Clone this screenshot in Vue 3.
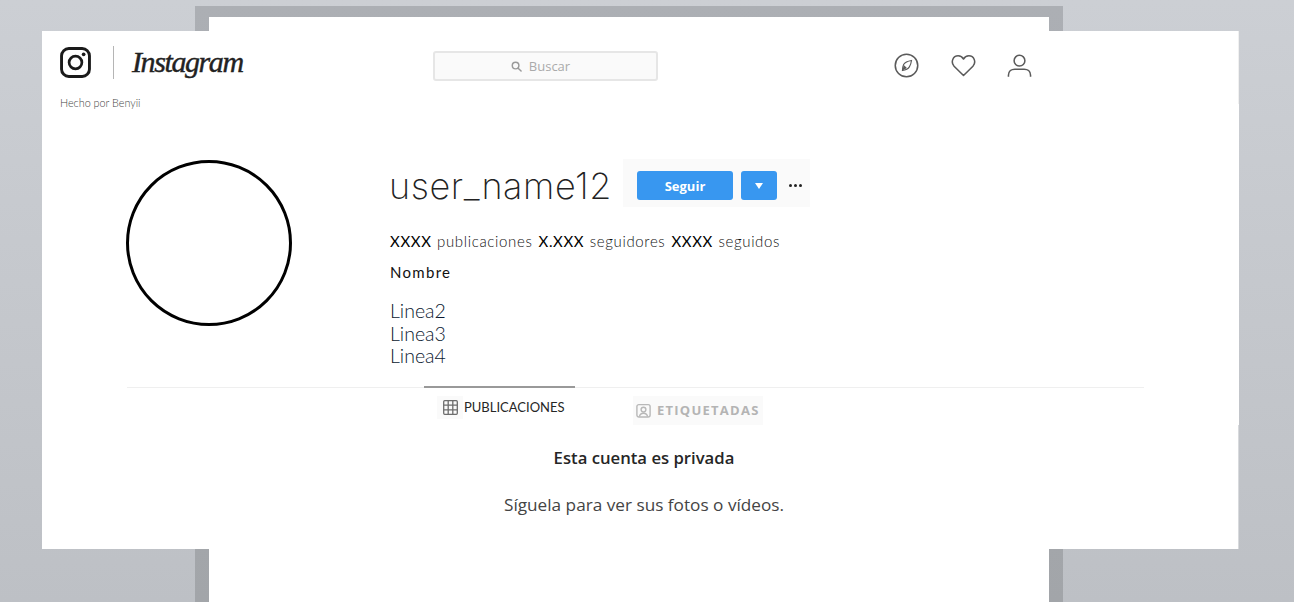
<script setup>
const stats = [
  { value: 'XXXX', label: 'publicaciones' },
  { value: 'X.XXX', label: 'seguidores' },
  { value: 'XXXX', label: 'seguidos' }
]
const lines = ['Linea2', 'Linea3', 'Linea4']
</script>

<template>
  <div class="stage">
    <div class="sheet-shadow"></div>
    <div class="sheet"></div>
    <main class="card">
      <span class="edge edge-top"></span>
      <span class="edge edge-bottom"></span>
      <header class="topbar">
        <div class="brand">
          <div class="brand-row">
            <svg class="logo" viewBox="0 0 32 32" fill="none" stroke="#1a1a1a">
              <rect x="1.6" y="1.6" width="28.8" height="28.8" rx="7.5" stroke-width="3" />
              <circle cx="16" cy="16" r="6.6" stroke-width="2.8" />
              <circle cx="24.4" cy="7.6" r="1.9" fill="#1a1a1a" stroke="none" />
            </svg>
            <span class="brand-divider"></span>
            <span class="wordmark">Instagram</span>
          </div>
          <p class="credit">Hecho por Benyii</p>
        </div>
        <div class="search">
          <svg class="search-icon" viewBox="0 0 12 12" fill="none" stroke="#9a9a9a" stroke-width="1.6">
            <circle cx="5" cy="5" r="3.6" />
            <path d="M7.8 7.8 11 11" stroke-linecap="round" />
          </svg>
          <span>Buscar</span>
        </div>
        <nav class="nav-icons">
          <svg class="nav-icon" viewBox="0 0 26 26" fill="none" stroke="#5a5a5a" stroke-width="1.6">
            <circle cx="13" cy="13" r="11.7" />
            <path d="M18.2 7.8c-3.8.6-6.8 1.8-8.2 4.2-.8 1.6-1 3.2-1.2 6.2 3.2-.5 5.6-1.4 7.2-3.8 1.2-1.8 1.8-3.8 2.2-6.6Z" stroke-width="1.2" />
            <path d="M10.2 12.6 13.4 15.6l-4.6 2.6Z" fill="#5a5a5a" stroke="none" />
          </svg>
          <svg class="nav-icon" viewBox="0 0 26 26" fill="none" stroke="#5a5a5a" stroke-width="1.6" stroke-linejoin="round">
            <path d="M13 23.4 3.2 13.7C-.6 9.4 2 2.9 7.4 2.9c2.5 0 4.4 1.2 5.6 3.4 1.2-2.2 3.1-3.4 5.6-3.4 5.4 0 8 6.5 4.2 10.8Z" />
          </svg>
          <svg class="nav-icon" viewBox="0 0 26 26" fill="none" stroke="#5a5a5a" stroke-width="1.6">
            <circle cx="13" cy="8" r="5.6" />
            <path d="M1.5 24.6v-1.4c0-4.4 3.2-6.4 6.6-6.4h9.8c3.4 0 6.6 2 6.6 6.4v1.4" />
          </svg>
        </nav>
      </header>

      <section class="profile">
        <div class="avatar"></div>
        <div class="details">
          <div class="name-row">
            <h1 class="username">user_name12</h1>
            <div class="actions">
              <button class="btn btn-follow" type="button">Seguir</button>
              <button class="btn btn-caret" type="button" aria-label="Más opciones">
                <svg viewBox="0 0 8 6" width="8" height="6"><path d="M0 0h8L4 6Z" fill="#fff" /></svg>
              </button>
              <span class="dots"><i></i><i></i><i></i></span>
            </div>
          </div>
          <ul class="stats">
            <li v-for="s in stats" :key="s.label"><b>{{ s.value }}</b> <span>{{ s.label }}</span></li>
          </ul>
          <p class="real-name">Nombre</p>
          <div class="bio">
            <div v-for="l in lines" :key="l">{{ l }}</div>
          </div>
        </div>
      </section>

      <section class="content">
        <div class="tabs">
          <div class="tab tab-active">
            <span class="tab-icon-wrap">
              <svg class="tab-icon" viewBox="0 0 15 15" fill="none" stroke="#6d6d6d" stroke-width="1.3">
                <rect x=".7" y=".7" width="13.6" height="13.6" rx="1" />
                <path d="M5.2.7v13.6M9.8.7v13.6M.7 5.2h13.6M.7 9.8h13.6" />
              </svg>
            </span>
            <span>PUBLICACIONES</span>
          </div>
          <div class="tab tab-idle">
            <svg class="tab-icon" viewBox="0 0 15 15" fill="none" stroke="#b8b8b8" stroke-width="1.4">
              <rect x=".9" y="1.6" width="13.2" height="12.4" rx="2" />
              <circle cx="7.5" cy="6.6" r="2.4" />
              <path d="M3.4 13.6c.5-2.4 2-3.4 4.1-3.4s3.6 1 4.1 3.4" />
            </svg>
            <span>ETIQUETADAS</span>
          </div>
        </div>
        <h2 class="private-title">Esta cuenta es privada</h2>
        <p class="private-text">Síguela para ver sus fotos o vídeos.</p>
      </section>
    </main>
  </div>
</template>

<style>
html, body { margin: 0; padding: 0; }
</style>

<style scoped>
.stage {
  position: relative;
  width: 1294px;
  height: 602px;
  overflow: hidden;
  background: linear-gradient(#cccfd4, #bdc0c5);
  font-family: Lato, "Liberation Sans", sans-serif;
}
.sheet-shadow {
  position: absolute;
  left: 195px;
  top: 6px;
  width: 868px;
  height: 596px;
  background: linear-gradient(#acafb4, #a2a5a9);
}
.sheet {
  position: absolute;
  left: 209px;
  top: 17px;
  width: 840px;
  height: 585px;
  background: #fff;
}
.card {
  position: absolute;
  left: 42px;
  top: 31px;
  width: 1197px;
  height: 518px;
  background: #fff;
  color: #111;
}
.edge { position: absolute; right: 0; width: 1px; }
.edge-top { top: 0; height: 73px; background: #f0f0f0; }
.edge-bottom { top: 394px; bottom: 0; background: #d8dadd; }

.topbar {
  display: flex;
  align-items: flex-start;
  height: 129px;
  padding-left: 18px;
  box-sizing: border-box;
}
.brand { width: 373px; padding-top: 14px; }
.brand-row { display: flex; align-items: center; height: 34px; }
.logo { width: 31px; height: 31px; margin-top: 1px; }
.brand-divider {
  width: 1px;
  height: 33px;
  margin: 0 18px 0 22px;
  background: #b5b5b5;
}
.wordmark {
  font-family: "Liberation Serif", serif;
  font-style: italic;
  font-size: 30px;
  line-height: 34px;
  letter-spacing: -1.4px;
  color: #222;
  -webkit-text-stroke: .4px #222;
}
.credit {
  margin: 16px 0 0;
  font-size: 10.8px;
  line-height: 15px;
  font-weight: 300;
  color: #444;
}
.search {
  display: flex;
  align-items: center;
  justify-content: center;
  gap: 7px;
  width: 225px;
  height: 30px;
  margin-top: 20px;
  padding-right: 10px;
  box-sizing: border-box;
  border: 2px solid #e6e6e6;
  border-radius: 3px;
  background: #fafafa;
  font-family: "Open Sans", sans-serif;
  font-size: 13px;
  color: #aaa;
}
.search-icon { width: 11px; height: 11px; }
.nav-icons {
  display: flex;
  gap: 31.5px;
  margin: 22px 0 0 236px;
}
.nav-icon { width: 25px; height: 25px; display: block; }

.profile { display: flex; padding-left: 84px; }
.avatar {
  flex: none;
  width: 166px;
  height: 166px;
  box-sizing: border-box;
  border: 3px solid #000;
  border-radius: 50%;
}
.details { margin-left: 98px; margin-top: -1px; }
.name-row { display: flex; align-items: flex-start; height: 48px; }
.username {
  margin: 3px 0 0 -1px;
  width: 234px;
  font-size: 36px;
  font-weight: 200;
  font-family: Inter, sans-serif;
  letter-spacing: .6px;
  line-height: 48px;
  color: #222;
  white-space: nowrap;
}
.actions {
  display: flex;
  align-items: flex-start;
  box-sizing: border-box;
  width: 187px;
  height: 48px;
  padding: 12px 0 0 14px;
  background: #fafafa;
}
.btn {
  display: flex;
  align-items: center;
  justify-content: center;
  height: 29px;
  padding: 0;
  border: 0;
  border-radius: 3px;
  background: #3897f0;
  color: #fff;
  font-family: "Open Sans", sans-serif;
  font-size: 13px;
  font-weight: 700;
}
.btn-follow { width: 96px; }
.btn-caret { width: 36px; margin-left: 8px; }
.dots { display: flex; gap: 2px; margin: 13px 0 0 12px; }
.dots i { width: 3px; height: 3px; border-radius: 50%; background: #222; }
.stats {
  display: flex;
  gap: 6px;
  margin: 24px 0 0;
  padding: 0;
  list-style: none;
  font-size: 15px;
  line-height: 20px;
  letter-spacing: .65px;
}
.stats b { font-weight: 400; color: #000; }
.stats span { font-weight: 300; color: #111; margin-left: 1px; }
.real-name {
  margin: 11px 0 0;
  font-size: 15px;
  line-height: 20px;
  font-weight: 400;
  letter-spacing: 1.3px;
  color: #111;
}
.bio {
  margin-top: 18px;
  font-size: 19.5px;
  line-height: 22.5px;
  font-weight: 300;
  color: #0a1830;
}

.content { margin: 19px 95px 0 85px; border-top: 1px solid #efefef; }
.tabs { display: flex; margin-left: 297px; height: 39px; }
.tab { display: flex; align-items: center; box-sizing: border-box; }
.tab-active {
  width: 151px;
  margin-top: -2px;
  height: 39px;
  padding: 2px 0 0 13px;
  border-top: 2px solid #999;
  gap: 1px;
  font-size: 13px;
  color: #262626;
}
.tab-icon-wrap {
  display: flex;
  align-items: center;
  justify-content: center;
  width: 26px;
  height: 23px;
  background: #fafafa;
}
.tab-idle {
  gap: 6px;
  width: 130px;
  height: 29px;
  margin: 8px 0 0 58px;
  padding-left: 3px;
  background: #fafafa;
  font-family: "Open Sans", sans-serif;
  font-size: 13px;
  font-weight: 700;
  letter-spacing: 1.25px;
  color: #b4b4b4;
}
.tab-icon { width: 15px; height: 15px; flex: none; }
.private-title {
  margin: 19px 0 0;
  padding-left: 17px;
  text-align: center;
  font-family: "Open Sans", sans-serif;
  font-size: 16.7px;
  line-height: 24px;
  font-weight: 600;
  color: #262626;
}
.private-text {
  margin: 23px 0 0;
  padding-left: 17px;
  text-align: center;
  font-family: "Open Sans", sans-serif;
  font-size: 17.2px;
  line-height: 24px;
  color: #444;
}
</style>
